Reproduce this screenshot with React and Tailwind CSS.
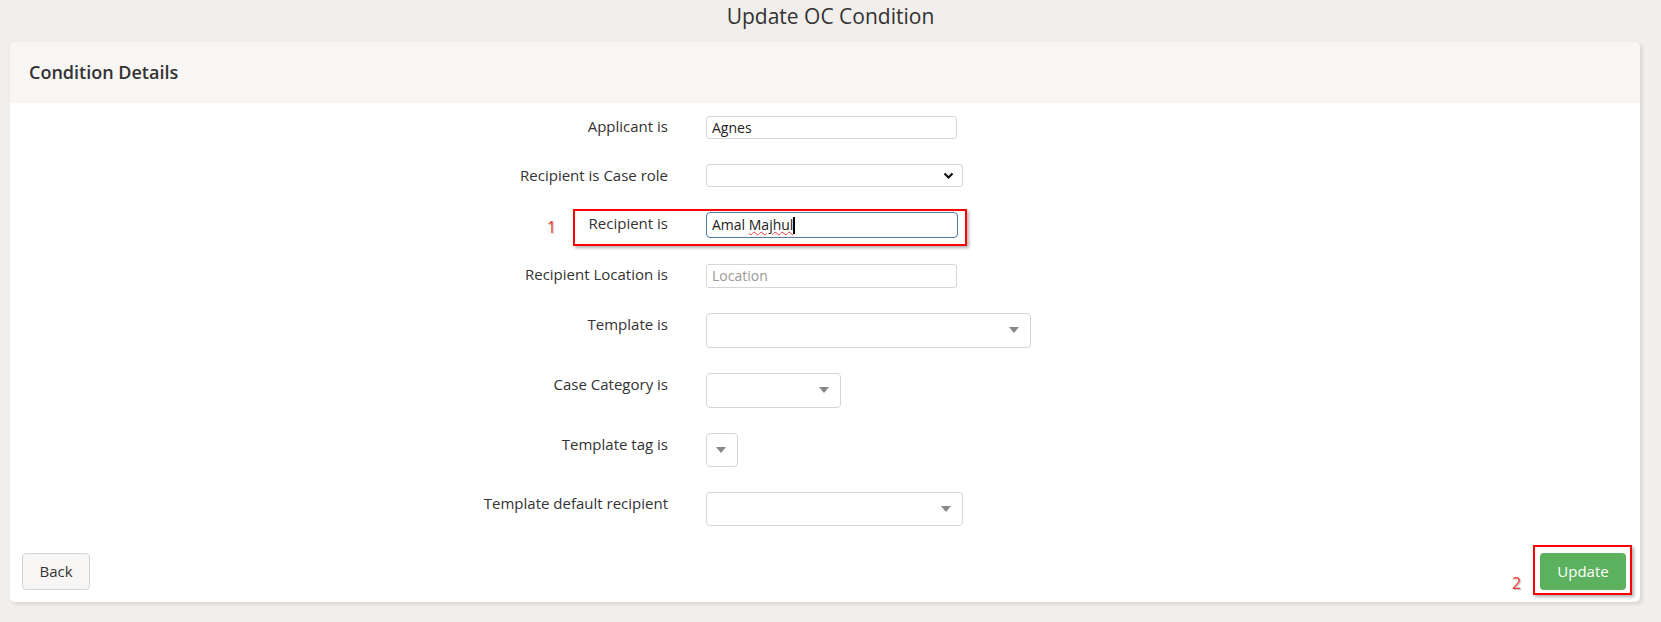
import { useState } from 'react';

const font = { fontFamily: '"Open Sans", "Liberation Sans", sans-serif' };

function Caret() {
  return <span className="absolute right-[11px] top-1/2 -translate-y-1/2 w-0 h-0 border-l-[5px] border-r-[5px] border-t-[6px] border-l-transparent border-r-transparent border-t-[#888]" />;
}

function Row({ label, children }) {
  return (
    <div className="flex items-start">
      <div className="w-[658px] text-right text-[15px] leading-[20px] pt-[1px] text-[#333]">{label}</div>
      <div className="ml-[38px]">{children}</div>
    </div>
  );
}

export default function App() {
  const [applicant, setApplicant] = useState('Agnes');
  const [location, setLocation] = useState('');

  return (
    <div className="min-h-screen bg-[#f2eeeb] text-[#333]" style={font}>
      <h1 className="h-[42px] pt-[2px] text-center text-[21px] leading-[28px] text-[#333]">Update OC Condition</h1>

      <div className="mx-[10px] mr-[21px] bg-white rounded-[5px] shadow-[2px_2px_4px_rgba(0,0,0,0.12)]">
        <div className="h-[61px] bg-[#f7f6f4] rounded-t-[5px] flex items-center px-[19px]">
          <h2 className="text-[18px] font-semibold text-[#333]">Condition Details</h2>
        </div>

        <div className="pt-[12px] flex flex-col gap-[25px]">
          <Row label="Applicant is">
            <input
              value={applicant}
              onChange={(e) => setApplicant(e.target.value)}
              className="w-[251px] h-[23px] border border-[#d6d6d6] rounded-[3px] px-[5px] text-[14px] text-[#222] outline-none"
            />
          </Row>

          <Row label="Recipient is Case role">
            <div className="relative w-[257px] h-[23px] border border-[#d6d6d6] rounded-[3px] bg-white">
              <svg className="absolute right-[8px] top-[7px]" width="11" height="8" viewBox="0 0 11 8">
                <path d="M1.5 1.5 L5.5 5.5 L9.5 1.5" fill="none" stroke="#111" strokeWidth="2.2" />
              </svg>
            </div>
          </Row>

          <div className="relative">
            <div className="absolute left-[537px] top-[3px] text-[16px] text-[#e53935] [text-shadow:1px_1px_1px_rgba(0,0,0,0.25)]">1</div>
            <div className="absolute left-[563px] top-[-3px] w-[394px] h-[37px] border-2 border-[#ff0000] shadow-[2px_2px_3px_rgba(0,0,0,0.3)]" />
            <Row label="Recipient is">
              <div className="w-[252px] h-[26px] border border-[#4f7ca5] rounded-[4px] px-[5px] text-[14px] leading-[24px] text-[#222] flex items-center">
                <span>Amal&nbsp;</span>
                <span className="underline decoration-wavy decoration-[#e53935] decoration-1 underline-offset-[1px]">Majhul</span>
                <span className="w-[2px] h-[17px] bg-black" />
              </div>
            </Row>
          </div>

          <Row label="Recipient Location is">
            <input
              value={location}
              placeholder="Location"
              onChange={(e) => setLocation(e.target.value)}
              className="w-[251px] h-[24px] border border-[#d6d6d6] rounded-[3px] px-[5px] text-[14px] text-[#222] placeholder:text-[#999] outline-none"
            />
          </Row>

          <Row label="Template is">
            <div className="relative w-[325px] h-[35px] border border-[#d6d6d6] rounded-[4px]"><Caret /></div>
          </Row>

          <Row label="Case Category is">
            <div className="relative w-[135px] h-[35px] border border-[#d6d6d6] rounded-[4px]"><Caret /></div>
          </Row>

          <Row label="Template tag is">
            <div className="relative w-[32px] h-[34px] border border-[#d6d6d6] rounded-[4px]"><Caret /></div>
          </Row>

          <Row label="Template default recipient">
            <div className="relative w-[257px] h-[34px] border border-[#d6d6d6] rounded-[4px]"><Caret /></div>
          </Row>
        </div>

        <div className="flex items-end justify-between px-[12px] pt-[27px] pb-[12px]">
          <button className="w-[68px] h-[37px] bg-[#f7f6f4] border border-[#d4d4d4] rounded-[4px] text-[15px] text-[#333]">Back</button>
          <div className="relative">
            <div className="absolute left-[-28px] top-[18px] text-[16px] text-[#e53935] [text-shadow:1px_1px_1px_rgba(0,0,0,0.25)]">2</div>
            <div className="absolute left-[-7px] top-[-8px] w-[99px] h-[50px] border-2 border-[#ff0000] shadow-[2px_2px_3px_rgba(0,0,0,0.3)]" />
            <button className="w-[86px] h-[37px] bg-[#5cb15f] rounded-[4px] text-[15px] text-white mr-[2px]">Update</button>
          </div>
        </div>
      </div>
    </div>
  );
}
